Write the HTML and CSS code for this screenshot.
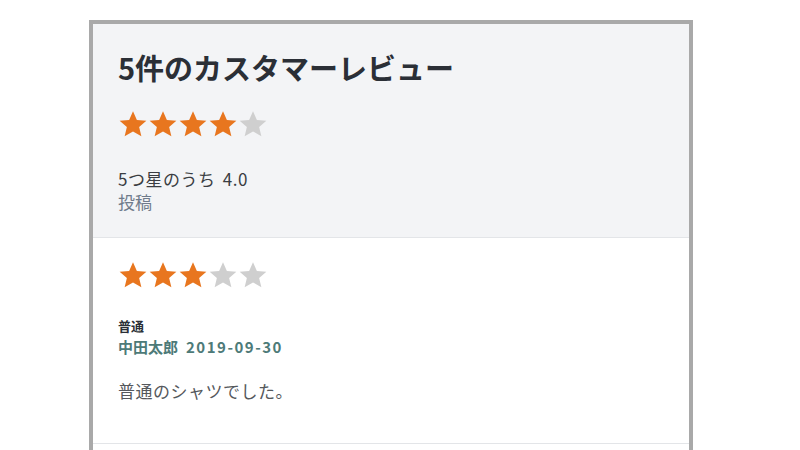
FILE: index.html
```html
<!DOCTYPE html>
<html lang="ja">
<head>
<meta charset="utf-8">
<link rel="stylesheet" href="styles.css">
</head>
<body>
<div class="reviews">
  <div class="summary">
    <h2 class="title">5件のカスタマーレビュー</h2>
    <div class="stars">
      <svg class="star on" viewBox="0 0 24 24"><path d="M12 1.8l3.1 7 7.6.6-5.8 5 1.8 7.4L12 17.9l-6.7 3.9 1.8-7.4-5.8-5 7.6-.6z"/></svg>
      <svg class="star on" viewBox="0 0 24 24"><path d="M12 1.8l3.1 7 7.6.6-5.8 5 1.8 7.4L12 17.9l-6.7 3.9 1.8-7.4-5.8-5 7.6-.6z"/></svg>
      <svg class="star on" viewBox="0 0 24 24"><path d="M12 1.8l3.1 7 7.6.6-5.8 5 1.8 7.4L12 17.9l-6.7 3.9 1.8-7.4-5.8-5 7.6-.6z"/></svg>
      <svg class="star on" viewBox="0 0 24 24"><path d="M12 1.8l3.1 7 7.6.6-5.8 5 1.8 7.4L12 17.9l-6.7 3.9 1.8-7.4-5.8-5 7.6-.6z"/></svg>
      <svg class="star off" viewBox="0 0 24 24"><path d="M12 1.8l3.1 7 7.6.6-5.8 5 1.8 7.4L12 17.9l-6.7 3.9 1.8-7.4-5.8-5 7.6-.6z"/></svg>
    </div>
    <p class="avg">5つ星のうち 4.0</p>
    <a class="post">投稿</a>
  </div>
  <div class="review">
    <div class="stars">
      <svg class="star on" viewBox="0 0 24 24"><path d="M12 1.8l3.1 7 7.6.6-5.8 5 1.8 7.4L12 17.9l-6.7 3.9 1.8-7.4-5.8-5 7.6-.6z"/></svg>
      <svg class="star on" viewBox="0 0 24 24"><path d="M12 1.8l3.1 7 7.6.6-5.8 5 1.8 7.4L12 17.9l-6.7 3.9 1.8-7.4-5.8-5 7.6-.6z"/></svg>
      <svg class="star on" viewBox="0 0 24 24"><path d="M12 1.8l3.1 7 7.6.6-5.8 5 1.8 7.4L12 17.9l-6.7 3.9 1.8-7.4-5.8-5 7.6-.6z"/></svg>
      <svg class="star off" viewBox="0 0 24 24"><path d="M12 1.8l3.1 7 7.6.6-5.8 5 1.8 7.4L12 17.9l-6.7 3.9 1.8-7.4-5.8-5 7.6-.6z"/></svg>
      <svg class="star off" viewBox="0 0 24 24"><path d="M12 1.8l3.1 7 7.6.6-5.8 5 1.8 7.4L12 17.9l-6.7 3.9 1.8-7.4-5.8-5 7.6-.6z"/></svg>
    </div>
    <div class="meta">
      <div class="headline">普通</div>
      <div class="byline"><span class="author">中田太郎</span><span class="date">2019-09-30</span></div>
    </div>
    <p class="body">普通のシャツでした。</p>
  </div>
</div>
</body>
</html>
```
FILE: styles.css
```css
html, body {
  margin: 0;
  padding: 0;
  background: #ffffff;
}
body {
  font-family: "Noto Sans CJK JP", "Noto Sans", sans-serif;
  color: #333;
  height: 450px;
  overflow: hidden;
}
.reviews {
  margin: 20px 0 0 89px;
  width: 596px;
  border: 4px solid #a9a9a9;
  border-bottom: none;
  height: 500px;
}
.summary {
  background: #f3f4f6;
  padding: 23px 25px 24px;
  border-bottom: 1px solid #e3e5e8;
}
.title {
  margin: 0;
  font-size: 29px;
  line-height: 40px;
  font-weight: 700;
  color: #2b2f36;
}
.stars {
  display: flex;
  gap: 0;
}
.summary .stars {
  margin-top: 22px;
}
.star {
  width: 30px;
  height: 30px;
  display: block;
}
.star.on { fill: #e8761f; }
.star.off { fill: #cfcfcf; }
.avg {
  margin: 28px 0 0;
  font-size: 17px;
  line-height: 23px;
  letter-spacing: 0.5px;
  word-spacing: 3px;
  color: #3a3d42;
}
.post {
  display: block;
  font-size: 17px;
  line-height: 23px;
  color: #6f7b8b;
}
.review {
  padding: 22px 25px 40px;
  border-bottom: 1px solid #e3e5e8;
}
.meta {
  margin-top: 27px;
}
.headline {
  font-size: 13px;
  line-height: 18px;
  font-weight: 700;
  color: #2b2f36;
}
.byline {
  margin-top: 2px;
  font-size: 15px;
  line-height: 20px;
  font-weight: 700;
  color: #4d7a78;
  display: flex;
  gap: 8px;
}
.date {
  letter-spacing: 1.5px;
}
.body {
  margin: 22px 0 0;
  font-size: 17px;
  line-height: 24px;
  letter-spacing: 0.5px;
  color: #55585c;
}
```
